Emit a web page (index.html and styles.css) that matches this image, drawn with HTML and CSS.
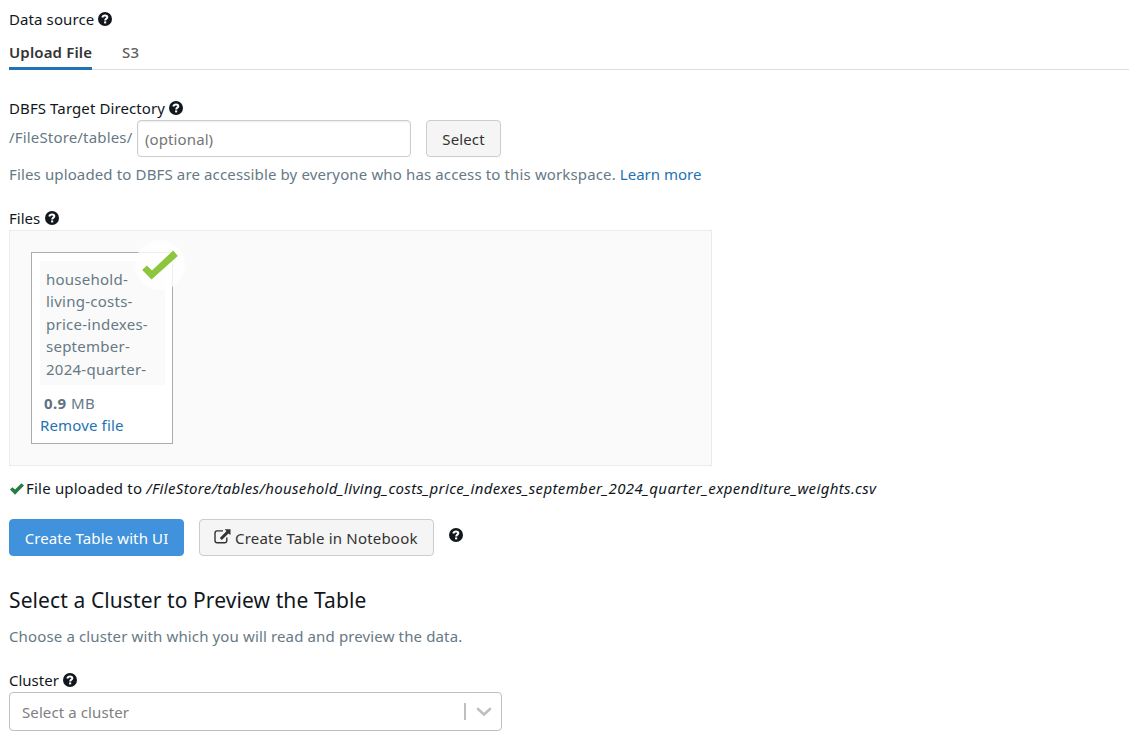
FILE: index.html
```html
<!DOCTYPE html>
<html lang="en">
<head>
<meta charset="utf-8">
<title>Create New Table</title>
<link rel="stylesheet" href="styles.css">
</head>
<body>
<svg width="0" height="0" class="defs">
  <symbol id="help" viewBox="0 0 14 14">
    <circle cx="7" cy="7" r="7" fill="#11171c"/>
    <path d="M4.300 5.400C4.600 4.200 5.600 3.400 7 3.400c1.400 0 2.300.700 2.300 1.800 0 1.500-2.100 1.400-2.100 3.200" fill="none" stroke="#fff" stroke-width="2"/>
    <rect x="6.100" y="9.400" width="2.100" height="2" fill="#fff"/>
  </symbol>
</svg>
<main class="page">
  <div class="label source"><span>Data source</span><svg class="help"><use href="#help"/></svg></div>
  <nav class="tabs">
    <a class="tab active">Upload File</a>
    <a class="tab">S3</a>
  </nav>
  <div class="label target"><span>DBFS Target Directory</span><svg class="help"><use href="#help"/></svg></div>
  <div class="target-row">
    <span class="prefix">/FileStore/tables/</span>
    <input class="path-input" type="text" placeholder="(optional)">
    <button class="btn select-btn">Select</button>
  </div>
  <p class="hint access"><span>Files uploaded to DBFS are accessible by everyone who has access to this workspace.</span> <a class="link">Learn more</a></p>
  <div class="label files"><span>Files</span><svg class="help"><use href="#help"/></svg></div>
  <section class="dropzone">
    <div class="file-card">
      <div class="file-name">household-<br>living-costs-<br>price-indexes-<br>september-<br>2024-quarter-</div>
      <div class="file-size"><strong>0.9</strong> MB</div>
      <a class="link remove">Remove file</a>
      <svg class="done" viewBox="0 0 50 50"><circle cx="25" cy="25" r="25" fill="#fff" fill-opacity=".8"/><path d="M7.200 30L11.800 25.500 17 30.500 38.200 10.500 42.800 16 16.500 39.500z" fill="#8cc63f"/></svg>
    </div>
  </section>
  <div class="uploaded"><svg class="check" viewBox="0 0 14 12"><path d="M0 6.500L2.400 4.200 5 6.500 11.500.300 14 2.600 5 11.700z" fill="#277c43"/></svg><span>File uploaded to</span><em>/FileStore/tables/household_living_costs_price_indexes_september_2024_quarter_expenditure_weights.csv</em></div>
  <div class="actions">
    <button class="btn primary">Create Table with UI</button>
    <button class="btn notebook"><svg class="external" viewBox="0 0 17 15"><path d="M9 1.900H3.200Q1 1.900 1 4.100v7.500Q1 13.800 3.200 13.800h7.400q2.200 0 2.200-2.200V8.500" fill="none" stroke="#333" stroke-width="1.400"/><path d="M5.800 8.900L12.400 2.300 10.700.300h5.800v5.800l-2-1.600-6.700 6.500z" fill="#333"/></svg><span>Create Table in Notebook</span></button>
    <svg class="help"><use href="#help"/></svg>
  </div>
  <h2 class="title">Select a Cluster to Preview the Table</h2>
  <p class="hint choose">Choose a cluster with which you will read and preview the data.</p>
  <div class="label cluster"><span>Cluster</span><svg class="help"><use href="#help"/></svg></div>
  <div class="combo"><span class="combo-text">Select a cluster</span><i class="divider"></i><svg class="chevron" viewBox="0 0 16 10"><path d="M2 2l6 5.500L14 2" fill="none" stroke="#bfbfbf" stroke-width="2.600" stroke-linecap="round"/></svg></div>
</main>
</body>
</html>
```
FILE: styles.css
```css
* { box-sizing: border-box; }
body { margin: 0; background: #fff; color: #11171c; font: 15px/22px "Noto Sans", sans-serif; letter-spacing: .1px; overflow: hidden; }
.defs { display: block; }
.page { display: flex; flex-direction: column; padding: 8px 0 0 9px; height: 744px; }
.page > * { flex: none; }
span, em, a { white-space: nowrap; }
.label { display: flex; align-items: center; gap: 4px; height: 22px; }
.help { width: 14px; height: 14px; flex: none; display: block; }
.files { letter-spacing: 0; }
.tabs { display: flex; gap: 30px; height: 32px; margin-top: 8px; border-bottom: 1px solid #ddd; }
.tab { height: 32px; padding-top: 3px; color: #5f5f5f; font-weight: 500; letter-spacing: .15px; }
.tab.active { width: 83px; color: #333; font-weight: 600; border-bottom: 3px solid #2272b4; }
.target { margin-top: 27px; }
.target-row { display: flex; height: 38px; margin-top: 1px; }
.prefix { width: 128px; padding-top: 6px; color: #667985; letter-spacing: .17px; }
.path-input { width: 274px; height: 37px; border: 1px solid #ccc; border-radius: 4px; padding: 0 7px; font: inherit; letter-spacing: .1px; box-shadow: inset 0 1px 2px #eee; }
.path-input::placeholder { color: #757575; opacity: 1; }
.btn { height: 37px; padding: 0; border: 1px solid #ccc; border-radius: 4px; background: #f5f5f5; color: #333; font: inherit; letter-spacing: .12px; white-space: nowrap; }
.select-btn { width: 75px; margin-left: 15px; }
.hint { margin: 0; color: #667985; letter-spacing: .135px; white-space: nowrap; }
.access { display: flex; gap: 4px; margin-top: 5px; }
.link { color: #2272b4; }
.access .link { letter-spacing: 0; }
.files { margin-top: 22px; gap: 5px; }
.dropzone { width: 703px; height: 236px; margin-top: 1px; padding: 21px; border: 1px solid #ebebeb; background: #fafafa; }
.file-card { position: relative; width: 142px; height: 192px; padding: 8px; border: 1px solid #acacac; background: #fff; color: #667985; }
.file-name { width: 125px; height: 124px; padding: 6.8px 6px 0; background: #fafafa; line-height: 22.5px; letter-spacing: .25px; white-space: nowrap; }
.file-size { margin: 7px 0 0 4px; letter-spacing: .4px; }
.file-size strong { color: #5f7281; }
.remove { display: block; letter-spacing: .15px; }
.done { position: absolute; left: 103px; top: -13px; width: 50px; height: 50px; }
.uploaded { display: flex; align-items: center; height: 22px; margin-top: 11px; }
.check { width: 14px; height: 12px; margin: 1px 2px 0 1px; }
.uploaded em { margin-left: 4px; letter-spacing: .35px; }
.uploaded span { letter-spacing: .2px; }
.actions { display: flex; gap: 15px; height: 37px; margin-top: 20px; }
.primary { width: 175px; background: #4092dc; border-color: #4092dc; color: #fff; }
.notebook { width: 235px; display: flex; align-items: center; padding-left: 14px; letter-spacing: .2px; }
.external { width: 17px; height: 15px; margin: -2px 4px 0 0; }
.actions .help { margin-top: 9px; }
.title { height: 30px; margin: 29px 0 0; font-size: 21px; line-height: 30px; font-weight: 400; letter-spacing: .1px; }
.choose { margin-top: 10px; }
.cluster { margin-top: 22px; letter-spacing: 0; }
.combo { display: flex; align-items: center; width: 493px; height: 39px; margin-top: 1px; border: 1px solid #bfbfbf; border-radius: 4px; padding-left: 12px; color: #808080; }
.combo-text { width: 442px; }
.divider { width: 2px; height: 17px; background: #bfbfbf; }
.chevron { width: 16px; height: 10px; margin-left: 10px; margin-top: 1px; }
```
